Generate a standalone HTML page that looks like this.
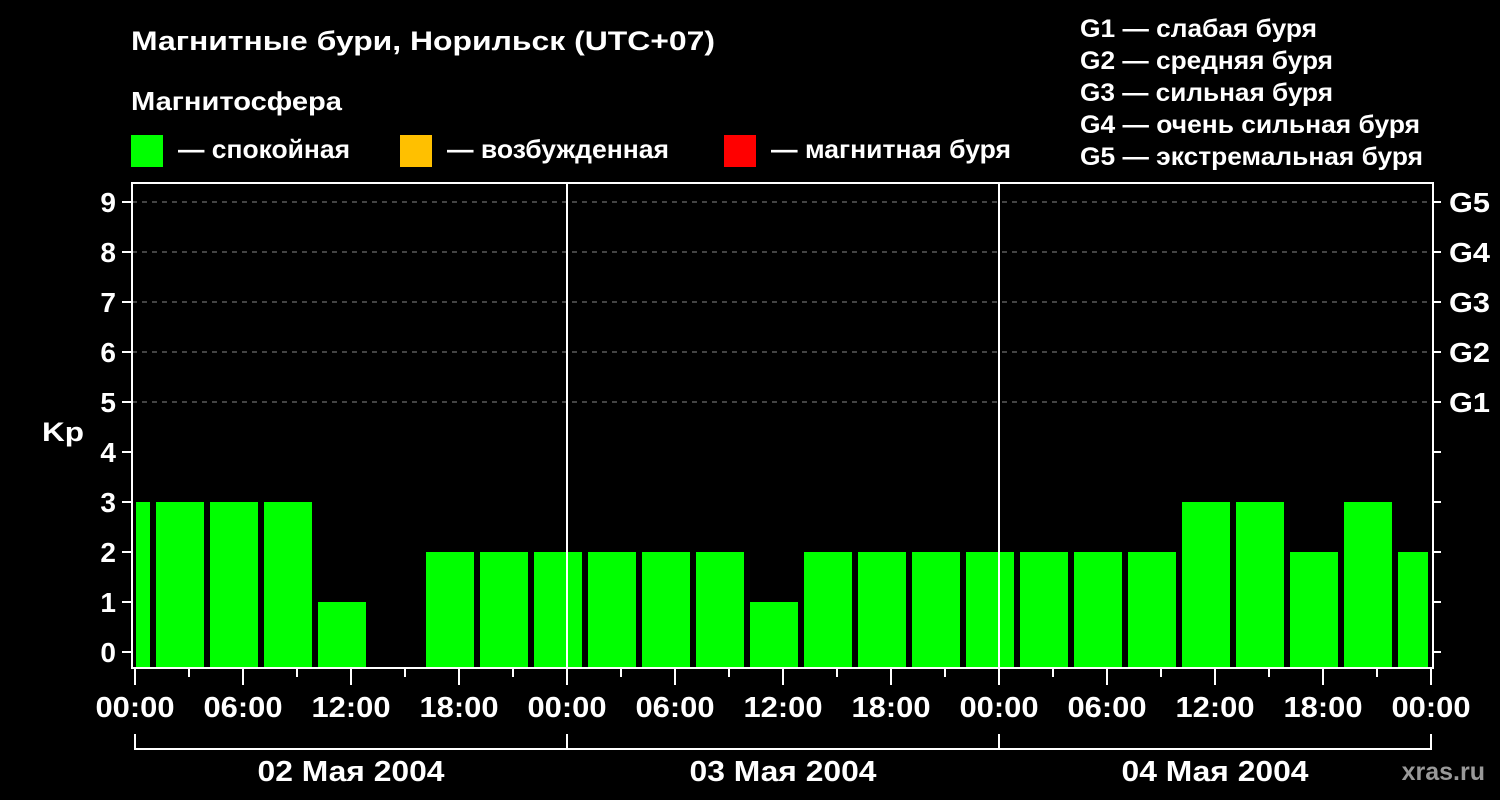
<!DOCTYPE html><html><head><meta charset="utf-8"><style>body{margin:0;background:#000;}svg{display:block}text{font-family:"Liberation Sans",sans-serif;font-weight:bold;fill:#fff}</style></head><body>
<svg width="1500" height="800" viewBox="0 0 1500 800">
<rect width="1500" height="800" fill="#000"/>
<text x="131" y="50" font-size="27" textLength="584" lengthAdjust="spacingAndGlyphs">Магнитные бури, Норильск (UTC+07)</text>
<text x="131" y="110" font-size="26" textLength="211" lengthAdjust="spacingAndGlyphs">Магнитосфера</text>
<rect x="131" y="135" width="32" height="32" fill="#00ff00"/><text x="178" y="158" font-size="26" textLength="172" lengthAdjust="spacingAndGlyphs">— спокойная</text>
<rect x="400" y="135" width="32" height="32" fill="#ffc000"/><text x="447" y="158" font-size="26" textLength="222" lengthAdjust="spacingAndGlyphs">— возбужденная</text>
<rect x="724" y="135" width="32" height="32" fill="#ff0000"/><text x="771" y="158" font-size="26" textLength="240" lengthAdjust="spacingAndGlyphs">— магнитная буря</text>
<g font-size="25"><text x="1080" y="37" textLength="237" lengthAdjust="spacingAndGlyphs">G1 — слабая буря</text><text x="1080" y="69" textLength="253" lengthAdjust="spacingAndGlyphs">G2 — средняя буря</text><text x="1080" y="101" textLength="253" lengthAdjust="spacingAndGlyphs">G3 — сильная буря</text><text x="1080" y="133" textLength="340" lengthAdjust="spacingAndGlyphs">G4 — очень сильная буря</text><text x="1080" y="165" textLength="343" lengthAdjust="spacingAndGlyphs">G5 — экстремальная буря</text></g>
<g fill="#00ff00">
<rect x="136" y="502" width="14" height="166"/>
<rect x="156" y="502" width="48" height="166"/><rect x="210" y="502" width="48" height="166"/><rect x="264" y="502" width="48" height="166"/><rect x="318" y="602" width="48" height="66"/>
<rect x="426" y="552" width="48" height="116"/><rect x="480" y="552" width="48" height="116"/><rect x="534" y="552" width="48" height="116"/><rect x="588" y="552" width="48" height="116"/><rect x="642" y="552" width="48" height="116"/><rect x="696" y="552" width="48" height="116"/>
<rect x="750" y="602" width="48" height="66"/>
<rect x="804" y="552" width="48" height="116"/><rect x="858" y="552" width="48" height="116"/><rect x="912" y="552" width="48" height="116"/><rect x="966" y="552" width="48" height="116"/><rect x="1020" y="552" width="48" height="116"/><rect x="1074" y="552" width="48" height="116"/><rect x="1128" y="552" width="48" height="116"/>
<rect x="1182" y="502" width="48" height="166"/><rect x="1236" y="502" width="48" height="166"/><rect x="1290" y="552" width="48" height="116"/><rect x="1344" y="502" width="48" height="166"/><rect x="1398" y="552" width="30" height="116"/>
</g>
<g stroke="#888" stroke-width="1" stroke-dasharray="5,5">
<line x1="132" y1="202" x2="1433" y2="202"/><line x1="132" y1="252" x2="1433" y2="252"/><line x1="132" y1="302" x2="1433" y2="302"/><line x1="132" y1="352" x2="1433" y2="352"/><line x1="132" y1="402" x2="1433" y2="402"/>
</g>
<g stroke="#fff" stroke-width="2" fill="none">
<rect x="132" y="183" width="1301" height="485"/>
<line x1="567" y1="183" x2="567" y2="668"/><line x1="999" y1="183" x2="999" y2="668"/>
<path d="M122 202h10M122 252h10M122 302h10M122 352h10M122 402h10M122 452h10M122 502h10M122 552h10M122 602h10M122 652h10"/>
<path d="M1433 202h8M1433 252h8M1433 302h8M1433 352h8M1433 402h8M1433 452h8M1433 502h8M1433 552h8M1433 602h8M1433 652h8"/>
<path d="M135 668v17M243 668v17M351 668v17M459 668v17M567 668v17M675 668v17M783 668v17M891 668v17M999 668v17M1107 668v17M1215 668v17M1323 668v17M1431 668v17"/>
<path d="M189 668v9M297 668v9M405 668v9M513 668v9M621 668v9M729 668v9M837 668v9M945 668v9M1053 668v9M1161 668v9M1269 668v9M1377 668v9"/>
<path d="M135 734v15H1431v-15M567 734v15M999 734v15"/>
</g>
<g font-size="28" text-anchor="end"><text x="116" y="212">9</text><text x="116" y="262">8</text><text x="116" y="312">7</text><text x="116" y="362">6</text><text x="116" y="412">5</text><text x="116" y="462">4</text><text x="116" y="512">3</text><text x="116" y="562">2</text><text x="116" y="612">1</text><text x="116" y="662">0</text></g>
<text x="42" y="441" font-size="27" textLength="42" lengthAdjust="spacingAndGlyphs">Kp</text>
<g font-size="28"><text x="1449" y="212" textLength="41" lengthAdjust="spacingAndGlyphs">G5</text><text x="1449" y="262" textLength="41" lengthAdjust="spacingAndGlyphs">G4</text><text x="1449" y="312" textLength="41" lengthAdjust="spacingAndGlyphs">G3</text><text x="1449" y="362" textLength="41" lengthAdjust="spacingAndGlyphs">G2</text><text x="1449" y="412" textLength="41" lengthAdjust="spacingAndGlyphs">G1</text></g>
<g font-size="29" text-anchor="middle"><text x="135" y="717" textLength="79" lengthAdjust="spacingAndGlyphs">00:00</text><text x="243" y="717" textLength="79" lengthAdjust="spacingAndGlyphs">06:00</text><text x="351" y="717" textLength="79" lengthAdjust="spacingAndGlyphs">12:00</text><text x="459" y="717" textLength="79" lengthAdjust="spacingAndGlyphs">18:00</text><text x="567" y="717" textLength="79" lengthAdjust="spacingAndGlyphs">00:00</text><text x="675" y="717" textLength="79" lengthAdjust="spacingAndGlyphs">06:00</text><text x="783" y="717" textLength="79" lengthAdjust="spacingAndGlyphs">12:00</text><text x="891" y="717" textLength="79" lengthAdjust="spacingAndGlyphs">18:00</text><text x="999" y="717" textLength="79" lengthAdjust="spacingAndGlyphs">00:00</text><text x="1107" y="717" textLength="79" lengthAdjust="spacingAndGlyphs">06:00</text><text x="1215" y="717" textLength="79" lengthAdjust="spacingAndGlyphs">12:00</text><text x="1323" y="717" textLength="79" lengthAdjust="spacingAndGlyphs">18:00</text><text x="1431" y="717" textLength="79" lengthAdjust="spacingAndGlyphs">00:00</text>
<text x="351" y="781" textLength="187" lengthAdjust="spacingAndGlyphs">02 Мая 2004</text><text x="783" y="781" textLength="187" lengthAdjust="spacingAndGlyphs">03 Мая 2004</text><text x="1215" y="781" textLength="187" lengthAdjust="spacingAndGlyphs">04 Мая 2004</text></g>
<text x="1485" y="780" font-size="25" text-anchor="end" style="fill:#999">xras.ru</text>
</svg></body></html>
